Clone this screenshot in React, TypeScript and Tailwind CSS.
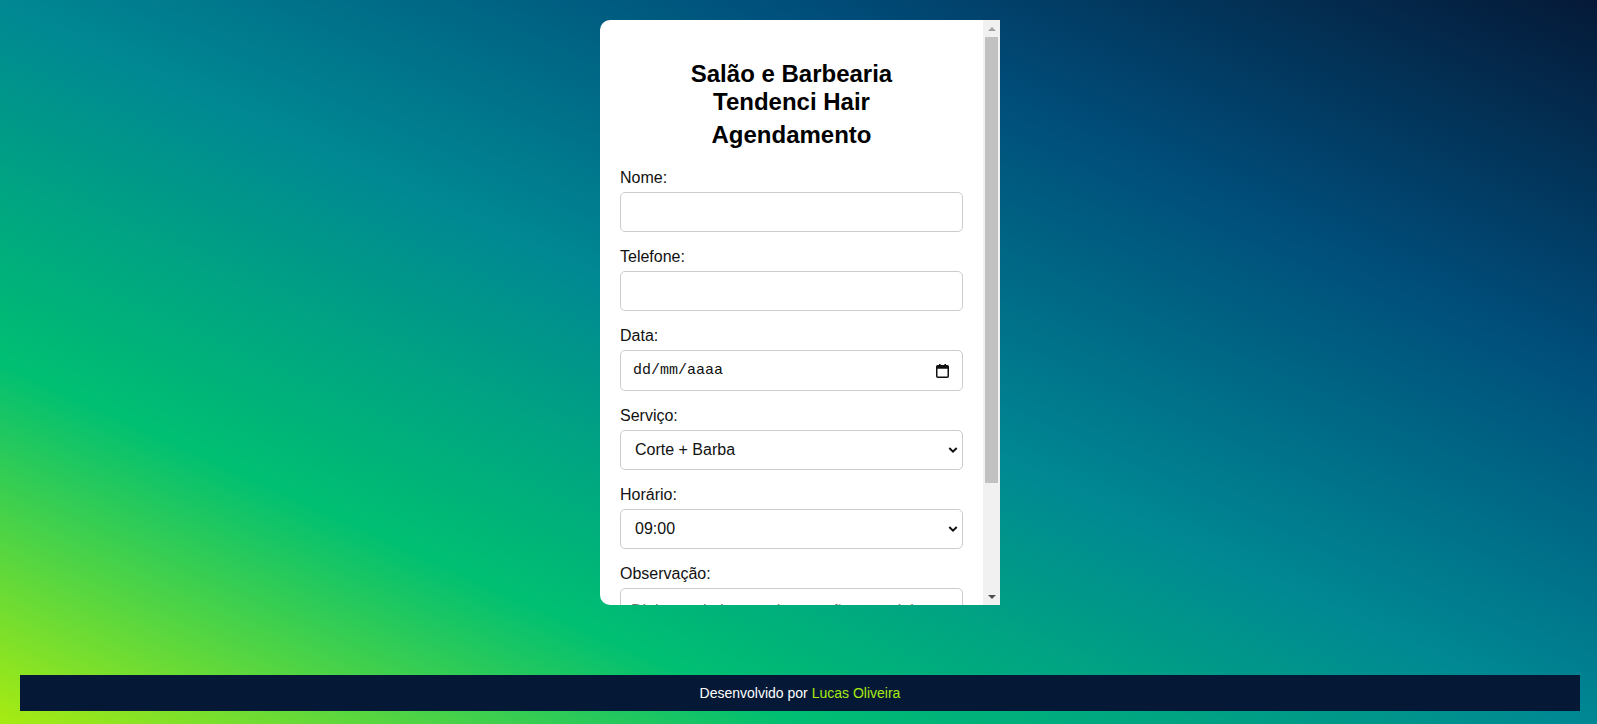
import { useState } from "react";

const servicos = ["Corte", "Barba", "Corte + Barba", "Escova", "Coloração"];
const horarios = ["09:00", "10:00", "11:00", "13:00", "14:00", "15:00", "16:00", "17:00"];

function Chevron() {
  return (
    <svg
      className="pointer-events-none absolute right-[5px] top-1/2 -translate-y-1/2"
      width="10"
      height="7"
      viewBox="0 0 10 7"
      fill="none"
    >
      <path d="M1.3 1.5 L5 5.1 L8.7 1.5" stroke="#111" strokeWidth="2" />
    </svg>
  );
}

function CalendarIcon() {
  return (
    <svg
      className="pointer-events-none absolute right-[14px] top-1/2 -translate-y-1/2"
      width="13"
      height="14"
      viewBox="0 0 13 14"
      fill="none"
    >
      <rect x="3" y="0" width="1.6" height="2.5" fill="#111" />
      <rect x="8.4" y="0" width="1.6" height="2.5" fill="#111" />
      <rect x="0.75" y="1.75" width="11.5" height="11.5" rx="1" stroke="#111" strokeWidth="1.5" />
      <rect x="0.75" y="1.75" width="11.5" height="3" fill="#111" />
    </svg>
  );
}

// classic scrollbar look, the headless page hides native ones
function ScrollBar() {
  return (
    <div className="flex w-[17px] shrink-0 flex-col bg-[#f1f1f1]">
      <div className="flex h-[17px] items-center justify-center">
        <svg width="8" height="4" viewBox="0 0 8 4">
          <path d="M0 4 L4 0 L8 4 Z" fill="#a3a3a3" />
        </svg>
      </div>
      <div className="flex-1">
        <div className="mx-[2px] h-[446px] bg-[#c1c1c1]" />
      </div>
      <div className="flex h-[17px] items-center justify-center">
        <svg width="8" height="4" viewBox="0 0 8 4">
          <path d="M0 0 L8 0 L4 4 Z" fill="#505050" />
        </svg>
      </div>
    </div>
  );
}

export default function App() {
  const [nome, setNome] = useState("");
  const [telefone, setTelefone] = useState("");
  const [data, setData] = useState("");
  const [servico, setServico] = useState("Corte + Barba");
  const [horario, setHorario] = useState("09:00");
  const [obs, setObs] = useState("");

  const label = "block mb-[5px] text-[16px] leading-[19px] text-[#111]";
  const field =
    "block w-full h-[40px] px-[10px] border border-[#ccc] rounded-[5px] bg-white text-[16px] text-[#111] outline-none";
  const select =
    "block w-full h-[40px] pl-[14px] pr-[24px] border border-[#ccc] rounded-[5px] bg-white text-[16px] text-[#111] appearance-none outline-none";

  return (
    <div className="flex flex-col h-screen bg-[linear-gradient(to_left_bottom,#051937,#004d7a,#008793,#00bf72,#a8eb12)] font-['Liberation_Sans',Arial,sans-serif]">
      <div className="ml-[600px] mt-[20px] flex w-[400px] h-[585px] shrink-0 overflow-hidden rounded-l-[10px] bg-white">
        <div className="flex-1 overflow-y-auto px-[20px] pt-[20px] pb-[20px] [scrollbar-width:none]">
          <h2 className="mt-[20px] text-center text-[24px] leading-[28px] font-bold text-black">
            Salão e Barbearia
            <br />
            Tendenci Hair
          </h2>
          <h2 className="mt-[5px] mb-[19px] text-center text-[24px] leading-[28px] font-bold text-black">
            Agendamento
          </h2>

          <form onSubmit={(e) => e.preventDefault()}>
            <div className="mb-[15px]">
              <label className={label}>Nome:</label>
              <input
                type="text"
                className={field}
                value={nome}
                onChange={(e) => setNome(e.target.value)}
              />
            </div>

            <div className="mb-[15px]">
              <label className={label}>Telefone:</label>
              <input
                type="tel"
                className={field}
                value={telefone}
                onChange={(e) => setTelefone(e.target.value)}
              />
            </div>

            <div className="mb-[15px]">
              <label className={label}>Data:</label>
              <div className="relative">
                <input
                  type="text"
                  placeholder="dd/mm/aaaa"
                  className="block w-full h-[41px] pl-[12px] pr-[10px] border border-[#ccc] rounded-[5px] bg-white text-[15px] text-[#111] placeholder:text-[#111] font-['Liberation_Mono',monospace] outline-none"
                  value={data}
                  onChange={(e) => setData(e.target.value)}
                />
                <CalendarIcon />
              </div>
            </div>

            <div className="mb-[15px]">
              <label className={label}>Serviço:</label>
              <div className="relative">
                <select className={select} value={servico} onChange={(e) => setServico(e.target.value)}>
                  {servicos.map((s) => (
                    <option key={s}>{s}</option>
                  ))}
                </select>
                <Chevron />
              </div>
            </div>

            <div className="mb-[15px]">
              <label className={label}>Horário:</label>
              <div className="relative">
                <select className={select} value={horario} onChange={(e) => setHorario(e.target.value)}>
                  {horarios.map((h) => (
                    <option key={h}>{h}</option>
                  ))}
                </select>
                <Chevron />
              </div>
            </div>

            <div className="mb-[15px]">
              <label className={label}>Observação:</label>
              <textarea
                rows={3}
                placeholder="Digite aqui alguma observação especial"
                className="block w-full h-[80px] px-[10px] py-[10px] border border-[#ccc] rounded-[5px] bg-white text-[16px] text-[#111] placeholder:text-[#757575] resize-y outline-none"
                value={obs}
                onChange={(e) => setObs(e.target.value)}
              />
            </div>

            <button
              type="submit"
              className="block w-full h-[40px] rounded-[5px] bg-[#00bf72] text-[16px] font-bold text-white"
            >
              Agendar
            </button>
          </form>
        </div>
        <ScrollBar />
      </div>

      <footer className="mt-auto mb-[13px] ml-[20px] flex h-[36px] w-[1560px] shrink-0 items-center justify-center bg-[#051937] text-[14px] text-white">
        <p>
          Desenvolvido por <span className="text-[#a8eb12]">Lucas Oliveira</span>
        </p>
      </footer>
    </div>
  );
}
